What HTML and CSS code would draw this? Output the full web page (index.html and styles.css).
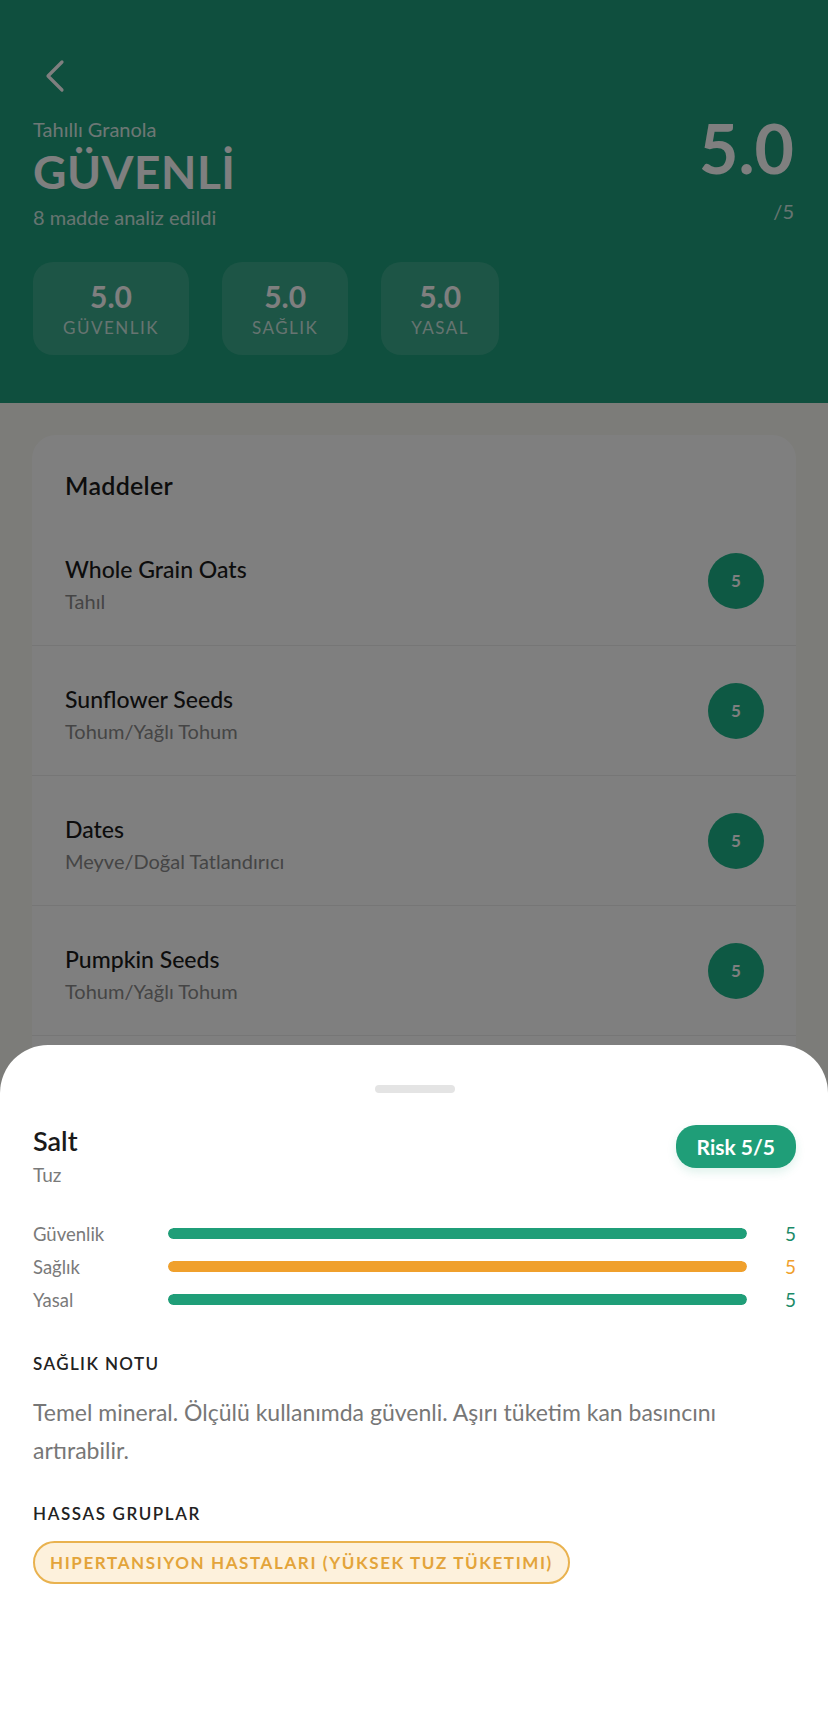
FILE: index.html
```html
<!DOCTYPE html>
<html lang="tr">
<head>
<meta charset="utf-8">
<title>Tahıllı Granola</title>
<link rel="stylesheet" href="styles.css">
</head>
<body>
<div class="page">
  <header class="hero">
    <button class="back" aria-label="Geri">
      <svg width="22" height="34" viewBox="0 0 22 34"><path d="M18 3 L4 17 L18 31" fill="none" stroke="#ffffff" stroke-width="3.2" stroke-linecap="round" stroke-linejoin="round"/></svg>
    </button>
    <div class="hero-row">
      <div class="hero-title">
        <div class="product">Tahıllı Granola</div>
        <h1 class="verdict">GÜVENLİ</h1>
        <div class="analyzed">8 madde analiz edildi</div>
      </div>
      <div class="hero-score">
        <div class="score">5.0</div>
        <div class="score-max">/5</div>
      </div>
    </div>
    <div class="metrics">
      <div class="metric"><div class="metric-val">5.0</div><div class="metric-label">GÜVENLIK</div></div>
      <div class="metric"><div class="metric-val">5.0</div><div class="metric-label">SAĞLIK</div></div>
      <div class="metric"><div class="metric-val">5.0</div><div class="metric-label">YASAL</div></div>
    </div>
  </header>

  <section class="card">
    <h2 class="card-title">Maddeler</h2>
    <div class="item">
      <div class="item-text"><div class="item-name">Whole Grain Oats</div><div class="item-sub">Tahıl</div></div>
      <div class="dot">5</div>
    </div>
    <div class="item">
      <div class="item-text"><div class="item-name">Sunflower Seeds</div><div class="item-sub">Tohum/Yağlı Tohum</div></div>
      <div class="dot">5</div>
    </div>
    <div class="item">
      <div class="item-text"><div class="item-name">Dates</div><div class="item-sub">Meyve/Doğal Tatlandırıcı</div></div>
      <div class="dot">5</div>
    </div>
    <div class="item">
      <div class="item-text"><div class="item-name">Pumpkin Seeds</div><div class="item-sub">Tohum/Yağlı Tohum</div></div>
      <div class="dot">5</div>
    </div>
  </section>
</div>

<div class="backdrop"></div>

<div class="sheet">
  <div class="handle"></div>
  <div class="sheet-head">
    <div>
      <div class="sheet-name">Salt</div>
      <div class="sheet-sub">Tuz</div>
    </div>
    <div class="risk">Risk 5/5</div>
  </div>

  <div class="bars">
    <div class="bar-label">Güvenlik</div>
    <div class="track"><div class="fill" style="width:100%"></div></div>
    <div class="bar-val">5</div>

    <div class="bar-label">Sağlık</div>
    <div class="track"><div class="fill warn" style="width:100%"></div></div>
    <div class="bar-val warn">5</div>

    <div class="bar-label">Yasal</div>
    <div class="track"><div class="fill" style="width:100%"></div></div>
    <div class="bar-val">5</div>
  </div>

  <h3 class="section-title">SAĞLIK NOTU</h3>
  <p class="note">Temel mineral. Ölçülü kullanımda güvenli. Aşırı tüketim kan basıncını artırabilir.</p>

  <h3 class="section-title second">HASSAS GRUPLAR</h3>
  <div class="tags">
    <span class="tag">HIPERTANSIYON HASTALARI (YÜKSEK TUZ TÜKETIMI)</span>
  </div>
</div>
</body>
</html>
```

FILE: styles.css
```css
* {
  box-sizing: border-box;
  margin: 0;
  padding: 0;
}

html,
body {
  width: 828px;
  height: 1715px;
  overflow: hidden;
}

body {
  font-family: "Lato", "Noto Sans", sans-serif;
  background: #f8f8f3;
  color: #1a1a1a;
}

/* ---------- hero ---------- */
.hero {
  background: #1e9e7c;
  color: #ffffff;
  padding: 59px 34px 48px 33px;
}

.back {
  display: block;
  width: 22px;
  height: 34px;
  margin-left: 11px;
  margin-bottom: 20px;
  background: none;
  border: 0;
}

.back svg {
  display: block;
}

.hero-row {
  display: flex;
  justify-content: space-between;
  align-items: flex-start;
}

.hero-title {
  padding-top: 5px;
}

.product {
  font-size: 20px;
  line-height: 22px;
  color: rgba(255, 255, 255, 0.85);
}

.verdict {
  font-size: 46px;
  line-height: 52px;
  font-weight: 700;
  margin-top: 6px;
  letter-spacing: 0.5px;
}

.analyzed {
  font-size: 20px;
  line-height: 22px;
  margin-top: 8px;
  color: rgba(255, 255, 255, 0.8);
}

.hero-score {
  text-align: right;
}

.score {
  font-size: 68px;
  line-height: 70px;
  font-weight: 700;
}

.score-max {
  font-size: 20px;
  line-height: 22px;
  margin-top: 17px;
  color: rgba(255, 255, 255, 0.8);
}

.metrics {
  display: flex;
  gap: 33px;
  margin-top: 34px;
}

.metric {
  background: rgba(255, 255, 255, 0.13);
  border-radius: 20px;
  padding: 17px 30px;
  text-align: center;
}

.metric-val {
  font-size: 30px;
  line-height: 34px;
  font-weight: 700;
}

.metric-label {
  font-size: 17px;
  line-height: 20px;
  margin-top: 5px;
  letter-spacing: 1.5px;
  color: rgba(255, 255, 255, 0.75);
}

/* ---------- ingredient card ---------- */
.card {
  margin: 32px 32px 0;
  background: #ffffff;
  border-radius: 24px;
  padding: 35px 0 60px;
}

.card-title {
  font-size: 25px;
  line-height: 30px;
  font-weight: 600;
  letter-spacing: 0.3px;
  padding-left: 33px;
  margin-bottom: 16px;
}

.item {
  display: flex;
  align-items: center;
  justify-content: space-between;
  height: 130px;
  padding: 0 32px 0 33px;
  border-bottom: 1px solid #ececec;
}

.item-text {
  margin-top: 7px;
}

.item-name {
  font-size: 23px;
  line-height: 28px;
  font-weight: 500;
}

.item-sub {
  font-size: 20px;
  line-height: 24px;
  margin-top: 6px;
  color: #8a8a8a;
}

.dot {
  width: 56px;
  height: 56px;
  border-radius: 50%;
  background: #1cb389;
  color: #ffffff;
  display: flex;
  align-items: center;
  justify-content: center;
  font-size: 17px;
  font-weight: 700;
}

/* ---------- modal ---------- */
.backdrop {
  position: fixed;
  inset: 0;
  background: rgba(0, 0, 0, 0.5);
}

.sheet {
  position: fixed;
  left: 0;
  right: 0;
  bottom: 0;
  height: 670px;
  background: #ffffff;
  border-radius: 48px 48px 0 0;
  padding: 40px 32px 0 33px;
}

.handle {
  width: 80px;
  height: 8px;
  border-radius: 4px;
  background: #e4e4e4;
  margin: 0 auto 32px;
}

.sheet-head {
  display: flex;
  justify-content: space-between;
  align-items: flex-start;
}

.sheet-name {
  font-size: 27px;
  line-height: 32px;
  font-weight: 600;
  color: #1a1a1a;
}

.sheet-sub {
  font-size: 19px;
  line-height: 24px;
  margin-top: 6px;
  color: #7a7a7a;
}

.risk {
  height: 43px;
  line-height: 43px;
  padding: 0 21px;
  border-radius: 20px;
  background: #1f9e78;
  color: #ffffff;
  font-size: 21px;
  font-weight: 700;
  box-shadow: 0 4px 10px rgba(31, 158, 120, 0.15);
}

.bars {
  display: grid;
  grid-template-columns: 135px 1fr 49px;
  grid-auto-rows: 33px;
  align-items: center;
  margin-top: 30px;
}

.bar-label {
  font-size: 18.5px;
  color: #7a7a7a;
}

.track {
  height: 11px;
  border-radius: 6px;
  background: #eeeeee;
  overflow: hidden;
}

.fill {
  height: 100%;
  border-radius: 6px;
  background: #1f9e78;
}

.fill.warn {
  background: #f0a02c;
}

.bar-val {
  text-align: right;
  font-size: 19px;
  color: #1b8a68;
}

.bar-val.warn {
  color: #f0a02c;
}

.section-title {
  font-size: 17px;
  line-height: 22px;
  font-weight: 600;
  letter-spacing: 1.4px;
  color: #222222;
  margin-top: 37px;
}

.section-title.second {
  margin-top: 34px;
  letter-spacing: 1.6px;
}

.note {
  font-size: 23px;
  line-height: 38px;
  margin-top: 18px;
  color: #777777;
}

.tags {
  display: flex;
  margin-top: 16px;
}

.tag {
  height: 43px;
  line-height: 39px;
  padding: 0 15px;
  border: 2px solid #e9b24f;
  border-radius: 22px;
  background: #fdf1dc;
  color: #e3a43a;
  font-size: 17px;
  font-weight: 700;
  letter-spacing: 1.6px;
}
```
